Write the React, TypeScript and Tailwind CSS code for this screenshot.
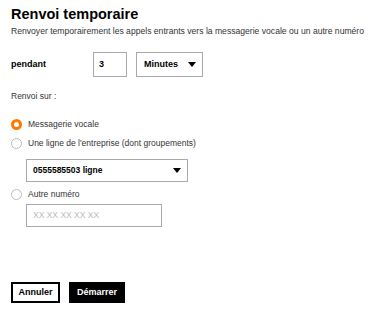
import { useState } from 'react';

const Caret = () => (
	<svg width="8" height="5" viewBox="0 0 8 5" className="shrink-0">
		<path d="M0 0h8L4 5z" fill="#000" />
	</svg>
);

const Radio = ({ checked }: { checked: boolean }) =>
	checked ? (
		<span className="box-border block h-[11px] w-[11px] rounded-full border-[3px] border-[#ff7900] bg-white" />
	) : (
		<span className="box-border block h-[11px] w-[11px] rounded-full border border-[#bbb] bg-white" />
	);

export default function App() {
	const [target, setTarget] = useState<'voicemail' | 'line' | 'other'>('voicemail');

	return (
		<div className="h-[315px] w-[369px] bg-white px-[11px] pt-[5px] font-['Liberation_Sans',Arial,sans-serif] text-black">
			<h1 className="text-[14.5px] font-bold leading-[18px]">Renvoi temporaire</h1>
			<p className="mt-[2px] whitespace-nowrap text-[8.6px] leading-[12px] text-[#333]">
				Renvoyer temporairement les appels entrants vers la messagerie vocale ou un autre numéro
			</p>

			<div className="mt-[15px] flex items-center">
				<span className="w-[82px] text-[9px] font-bold">pendant</span>
				<div className="flex h-[25px] w-[34px] items-center border border-[#aaa] px-[5px] text-[9px] font-bold">
					3
				</div>
				<div className="ml-[9px] flex h-[25px] w-[67px] items-center justify-between border border-[#aaa] pl-[7px] pr-[6px] text-[9px] font-bold">
					Minutes
					<Caret />
				</div>
			</div>

			<p className="mt-[13px] text-[8.5px] leading-[12px] text-[#333]">Renvoi sur :</p>

			<div className="mt-[16px] flex flex-col">
				<button
					onClick={() => setTarget('voicemail')}
					className="flex items-center gap-[6px] text-left text-[8.5px] leading-[12px] text-[#333]"
				>
					<Radio checked={target === 'voicemail'} />
					Messagerie vocale
				</button>
				<button
					onClick={() => setTarget('line')}
					className="mt-[7px] flex items-center gap-[6px] text-left text-[8.5px] leading-[12px] text-[#333]"
				>
					<Radio checked={target === 'line'} />
					Une ligne de l'entreprise (dont groupements)
				</button>
				<div className="ml-[15px] mt-[10px] flex h-[23px] w-[162px] items-center justify-between border border-[#aaa] pl-[6px] pr-[6px] text-[8.5px] font-bold">
					0555585503 ligne
					<Caret />
				</div>
				<button
					onClick={() => setTarget('other')}
					className="mt-[6px] flex items-center gap-[6px] text-left text-[8.5px] leading-[12px] text-[#333]"
				>
					<Radio checked={target === 'other'} />
					Autre numéro
				</button>
				<div className="ml-[15px] mt-[4px] flex h-[23px] w-[136px] items-center border border-[#aaa] px-[6px] text-[8.5px] text-[#bbb]">
					XX XX XX XX XX
				</div>
			</div>

			<div className="mt-[55px] flex gap-[9px]">
				<button className="h-[21px] w-[49px] border-2 border-black bg-white text-[9px] font-bold">
					Annuler
				</button>
				<button className="h-[21px] w-[56px] bg-black text-[9px] font-bold text-white">
					Démarrer
				</button>
			</div>
		</div>
	);
}
